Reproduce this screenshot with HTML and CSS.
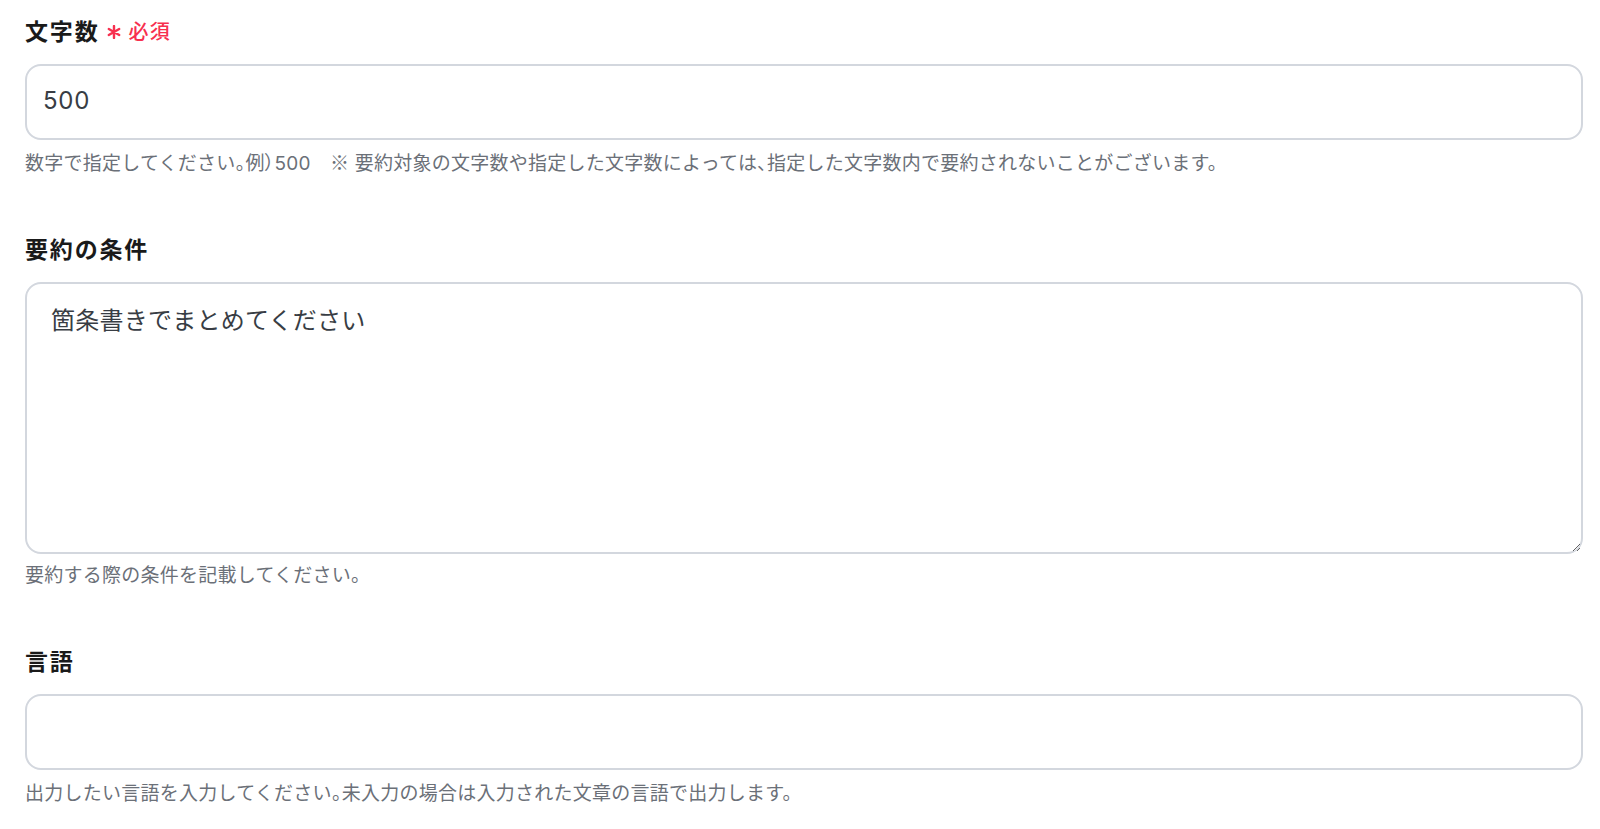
FILE: index.html
```html
<!DOCTYPE html>
<html lang="ja">
<head>
    <meta charset="UTF-8">
    <meta name="viewport" content="width=device-width, initial-scale=1.0">
    <title>要約設定</title>
    <link rel="stylesheet" href="styles.css">
</head>
<body>
    <form class="settings-form">
        <div class="field">
            <label class="field-label" for="charCount">
                文字数
                <span class="required">
                    <svg class="required-mark" viewBox="0 0 14 14" aria-hidden="true">
                        <path d="M7 1v12M1.8 4l10.4 6M1.8 10l10.4-6"/>
                    </svg>
                    必須
                </span>
            </label>
            <input type="text" id="charCount" class="field-input" value="500">
            <p class="field-help">数字で指定してください<span class="punct">。</span>例<span class="punct">）</span>500　<span class="note-mark">※</span> 要約対象の文字数や指定した文字数によっては<span class="punct">、</span>指定した文字数内で要約されないことがございます。</p>
        </div>

        <div class="field">
            <label class="field-label" for="conditions">要約の条件</label>
            <textarea id="conditions" class="field-textarea">箇条書きでまとめてください</textarea>
            <p class="field-help">要約する際の条件を記載してください。</p>
        </div>

        <div class="field">
            <label class="field-label" for="language">言語</label>
            <input type="text" id="language" class="field-input" value="">
            <p class="field-help">出力したい言語を入力してください<span class="punct">。</span>未入力の場合は入力された文章の言語で出力します。</p>
        </div>
    </form>
</body>
</html>
```

FILE: styles.css
```css
* {
    margin: 0;
    padding: 0;
    box-sizing: border-box;
}

body {
    font-family: Inter, "Noto Sans CJK JP", sans-serif;
    background: #fff;
    color: #1f1f1f;
    padding: 16px 17px 0 25px;
}

.settings-form {
    display: flex;
    flex-direction: column;
    gap: 58px;
}

.field {
    display: flex;
    flex-direction: column;
}

.field-label {
    display: flex;
    align-items: center;
    font-size: 23px;
    font-weight: 700;
    line-height: 32px;
    letter-spacing: 0.08em;
    color: #1a1a1a;
    margin-bottom: 16px;
}

.required {
    display: inline-flex;
    align-items: center;
    gap: 8px;
    margin-left: 7px;
    font-size: 20px;
    font-weight: 500;
    letter-spacing: 0.06em;
    color: #f7304f;
}

.required-mark {
    width: 14px;
    height: 14px;
    stroke: #f7304f;
    stroke-width: 2.4;
    stroke-linecap: round;
    fill: none;
}

.field-input,
.field-textarea {
    width: 100%;
    font-family: Inter, "Noto Sans CJK JP", sans-serif;
    font-size: 24px;
    color: #383d44;
    background: #fff;
    border: 2px solid #d3d7de;
    border-radius: 16px;
    outline: none;
}

.field-input {
    height: 76px;
    padding: 0 16px 3px;
    letter-spacing: 0.03em;
}

.field-textarea {
    height: 272px;
    padding: 20px 24px;
    line-height: 34px;
    letter-spacing: 0.01em;
    resize: vertical;
}

.field-help {
    margin-top: 10px;
    font-size: 19px;
    line-height: 24px;
    letter-spacing: 0.25px;
    color: #6b7078;
}

.field-help .punct {
    font-family: "Noto Sans CJK JP", sans-serif;
    font-feature-settings: "palt";
}

.note-mark {
    font-family: "Noto Sans CJK JP", sans-serif;
}
```
